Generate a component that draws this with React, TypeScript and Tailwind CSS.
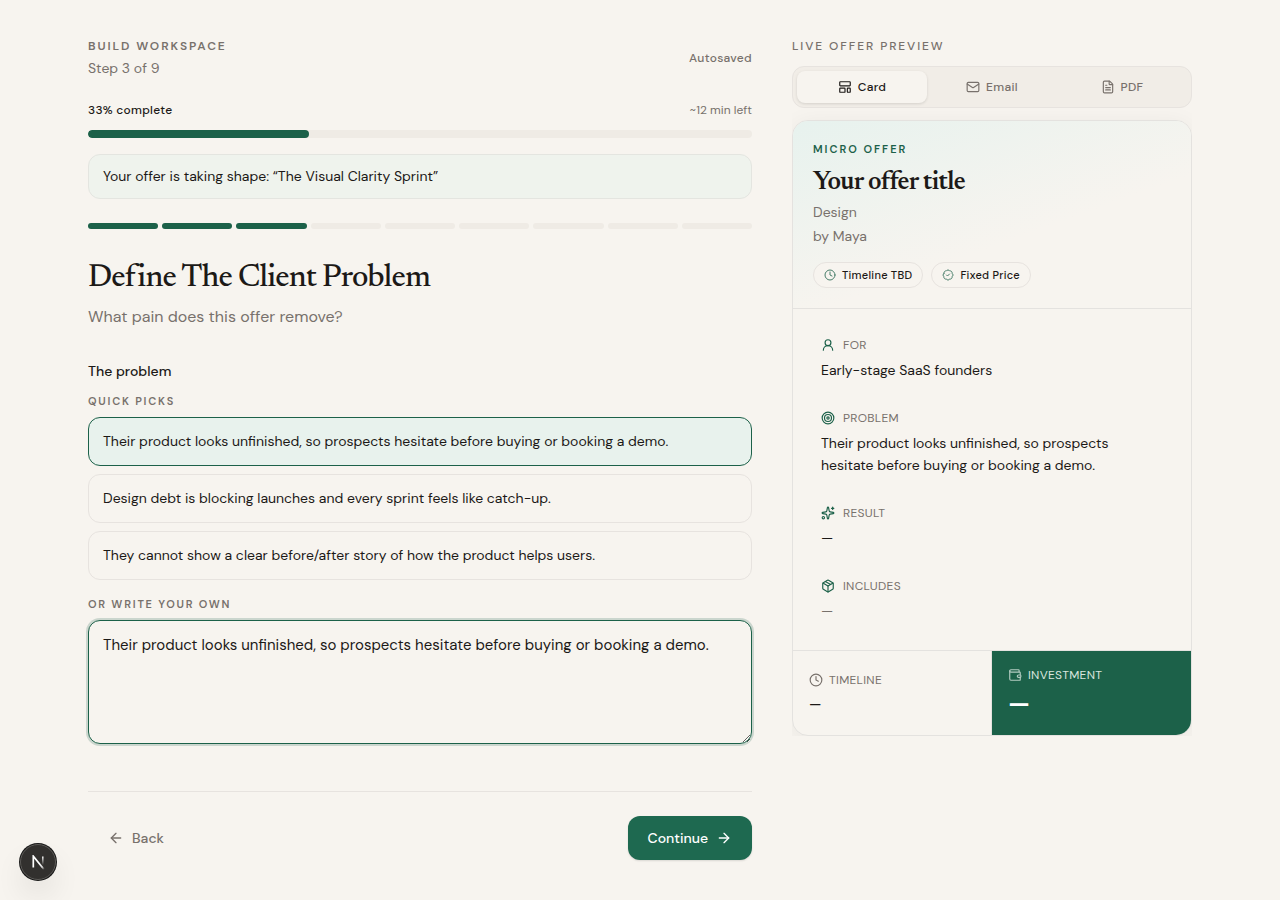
import { useState } from "react";
import type { ReactNode } from "react";
import {
  ArrowLeft,
  ArrowRight,
  BadgeCheck,
  Clock,
  FileText,
  LayoutTemplate,
  Mail,
  Package,
  Sparkles,
  Target,
  UserRound,
  Wallet,
} from "lucide-react";

const picks = [
  "Their product looks unfinished, so prospects hesitate before buying or booking a demo.",
  "Design debt is blocking launches and every sprint feels like catch-up.",
  "They cannot show a clear before/after story of how the product helps users.",
];

const steps = [1, 2, 3, 4, 5, 6, 7, 8, 9];

function Tab({ icon, label, active }: { icon: ReactNode; label: string; active?: boolean }) {
  return (
    <button
      type="button"
      role="tab"
      aria-selected={!!active}
      className={
        "flex h-8 flex-1 items-center justify-center gap-1.5 rounded-lg text-xs font-medium tracking-wide " +
        (active ? "bg-[#f7f4ef] text-[#1c1917] shadow-[0_1px_3px_rgba(0,0,0,0.12)]" : "text-[#78716c]")
      }
    >
      {icon}
      {label}
    </button>
  );
}

function Detail({
  icon,
  label,
  muted,
  children,
}: {
  icon: ReactNode;
  label: string;
  muted?: boolean;
  children: ReactNode;
}) {
  return (
    <div>
      <dt className="flex items-center gap-2 text-xs leading-[18px] tracking-wide text-[#78716c] uppercase">
        <span className="text-[#1c6149]">{icon}</span>
        {label}
      </dt>
      <dd className={"mt-[5px] text-sm leading-[22px] " + (muted ? "text-[#78716c]" : "text-[#1c1917]")}>
        {children}
      </dd>
    </div>
  );
}

function Chip({ icon, label }: { icon: ReactNode; label: string }) {
  return (
    <li className="flex h-[26px] items-center gap-1.5 rounded-full border border-[#e7e3df] bg-[#f7f4ef] px-2.5 text-[11px] font-medium tracking-wide text-[#1c1917]">
      <span className="text-[#1c6149] opacity-80">{icon}</span>
      {label}
    </li>
  );
}

function FrameworkBadge() {
  return (
    <button
      type="button"
      aria-label="Open developer tools"
      className="fixed bottom-5 left-5 flex size-9 items-center justify-center rounded-full border border-[#5c5a57] bg-[#32302e] shadow-[0_0_0_1px_#171717,0_16px_32px_-8px_rgba(0,0,0,0.24)]"
    >
      <svg width="14" height="15" viewBox="0 0 14 15" fill="none" aria-hidden="true">
        <path d="M13.3 14.8 2.3 1.2V12.6" stroke="url(#nStem)" strokeWidth="1.7" />
        <path d="M11.8 1.5v11.6" stroke="url(#nBar)" strokeWidth="1.5" />
        <defs>
          <linearGradient id="nStem" x1="8.5" y1="8.5" x2="13" y2="14.5" gradientUnits="userSpaceOnUse">
            <stop stopColor="#fff" />
            <stop offset="0.6" stopColor="#fff" stopOpacity="0.8" />
            <stop offset="1" stopColor="#fff" stopOpacity="0" />
          </linearGradient>
          <linearGradient id="nBar" x1="12" y1="1.5" x2="12" y2="10" gradientUnits="userSpaceOnUse">
            <stop stopColor="#fff" />
            <stop offset="1" stopColor="#fff" stopOpacity="0" />
          </linearGradient>
        </defs>
      </svg>
    </button>
  );
}

export default function App() {
  const [problem, setProblem] = useState(picks[0]);

  return (
    <div className="min-h-screen bg-[#f7f4ef] font-['DM_Sans',Inter,sans-serif] text-[#1c1917]">
      <div className="mx-auto grid max-w-6xl grid-cols-[minmax(0,1fr)_400px] items-start gap-10 px-6 pt-9 pb-10">
        <main>
          <header className="flex items-center justify-between">
            <div>
              <p className="text-xs leading-5 font-semibold tracking-[0.16em] text-[#78716c] uppercase">
                Build workspace
              </p>
              <p className="text-sm leading-6 text-[#78716c]">Step 3 of 9</p>
            </div>
            <p className="text-xs font-medium tracking-wide text-[#78716c]">Autosaved</p>
          </header>

          <div className="mt-5 flex items-center justify-between text-xs leading-5">
            <span className="font-medium tracking-wide">33% complete</span>
            <span className="text-[#78716c]">~12 min left</span>
          </div>
          <div className="mt-2.5 h-2 overflow-hidden rounded-full bg-[#efebe5]">
            <div className="h-full w-1/3 rounded-full bg-[#1c6149]" />
          </div>

          <p className="mt-4 rounded-xl border border-[#e4e5e0] bg-[#eff3ed] px-3.5 py-[11px] text-sm leading-[21px]">
            Your offer is taking shape: “The Visual Clarity Sprint”
          </p>

          <div className="mt-6 flex gap-1">
            {steps.map((step) => (
              <span
                key={step}
                className={"h-1.5 flex-1 rounded-full " + (step <= 3 ? "bg-[#1c6149]" : "bg-[#efebe5]")}
              />
            ))}
          </div>

          <h1 className="mt-[29px] font-['Newsreader','Liberation_Serif',serif] text-[32px] leading-10 font-medium tracking-tight">
            Define The Client Problem
          </h1>
          <p className="mt-[7px] text-base leading-6 text-[#78716c]">What pain does this offer remove?</p>

          <h2 className="mt-8 text-sm leading-5 font-medium">The problem</h2>
          <p className="mt-3 text-[11px] leading-4 font-semibold tracking-[0.16em] text-[#78716c] uppercase">
            Quick picks
          </p>
          <div className="mt-2 flex flex-col gap-2">
            {picks.map((pick) => (
              <button
                key={pick}
                type="button"
                aria-pressed={pick === problem}
                onClick={() => setProblem(pick)}
                className={
                  "rounded-xl border px-3.5 py-3 text-left text-sm leading-[23px] " +
                  (pick === problem ? "border-[#1c6149] bg-[#e8f2ed]" : "border-[#e7e3df]")
                }
              >
                {pick}
              </button>
            ))}
          </div>

          <label
            htmlFor="problem"
            className="mt-4 block text-[11px] leading-4 font-semibold tracking-[0.16em] text-[#78716c] uppercase"
          >
            Or write your own
          </label>
          <textarea
            id="problem"
            value={problem}
            onChange={(event) => setProblem(event.target.value)}
            className="mt-2 block h-[124px] w-full resize-y rounded-xl border border-[#1c6149] bg-[#f7f4ef] px-3.5 py-3 text-[15px] leading-6 shadow-[0_0_0_2px_rgba(28,97,73,0.2)] outline-none"
          />

          <footer className="mt-[47px] flex items-center justify-between border-t border-[#e7e3df] pt-6">
            <button
              type="button"
              className="flex h-11 items-center gap-2 rounded-xl px-5 text-sm font-medium text-[#78716c]"
            >
              <ArrowLeft size={16} />
              Back
            </button>
            <button
              type="button"
              className="flex h-11 items-center gap-2 rounded-xl bg-[#1e6950] px-5 text-sm font-medium text-white shadow-[0_1px_2px_rgba(0,0,0,0.12)]"
            >
              Continue
              <ArrowRight size={16} />
            </button>
          </footer>
        </main>

        <aside>
          <h2 className="text-xs leading-5 font-medium tracking-[0.16em] text-[#78716c] uppercase">
            Live offer preview
          </h2>
          <div role="tablist" className="mt-2.5 flex rounded-xl border border-[#e7e3df] bg-[#f1ede7] p-1">
            <Tab active icon={<LayoutTemplate size={14} />} label="Card" />
            <Tab icon={<Mail size={14} />} label="Email" />
            <Tab icon={<FileText size={14} />} label="PDF" />
          </div>

          <div className="overflow-hidden pt-3">
            <article className="overflow-hidden rounded-2xl border border-[#e4e2df] bg-[#f7f4ef] shadow-[0_4px_24px_rgba(0,0,0,0.06)]">
              <div className="border-b border-[#e4e2df] bg-[linear-gradient(160deg,#e7f2ee_0%,#f7f4ef_60%)] p-5">
                <p className="text-[11px] leading-4 font-semibold tracking-[0.18em] text-[#1c6149] uppercase">
                  Micro offer
                </p>
                <h3 className="mt-2.5 font-['Newsreader','Liberation_Serif',serif] text-[26px] leading-8 font-semibold tracking-tight">
                  Your offer title
                </h3>
                <p className="mt-px text-sm leading-6 text-[#78716c]">
                  Design
                  <br />
                  by Maya
                </p>
                <ul className="mt-3.5 flex gap-2">
                  <Chip icon={<Clock size={12} />} label="Timeline TBD" />
                  <Chip icon={<BadgeCheck size={12} />} label="Fixed Price" />
                </ul>
              </div>

              <dl className="flex flex-col gap-7 px-7 pt-[27px] pb-7">
                <Detail icon={<UserRound size={14} />} label="For">
                  Early-stage SaaS founders
                </Detail>
                <Detail icon={<Target size={14} />} label="Problem">
                  {problem}
                </Detail>
                <Detail icon={<Sparkles size={14} />} label="Result">
                  —
                </Detail>
                <Detail icon={<Package size={14} />} label="Includes" muted>
                  —
                </Detail>
              </dl>

              <div className="grid grid-cols-2 border-t border-[#e4e2df]">
                <div className="flex flex-col justify-center border-r border-[#e4e2df] px-4">
                  <p className="flex items-center gap-1.5 text-xs leading-[18px] tracking-wide text-[#78716c] uppercase">
                    <Clock size={14} />
                    Timeline
                  </p>
                  <p className="mt-1 text-sm leading-[22px] font-medium">—</p>
                </div>
                <div className="flex flex-col bg-[#1c6149] px-4 py-[15px] text-white">
                  <p className="flex items-center gap-1.5 text-xs leading-[18px] tracking-wide text-[#d9e6df] uppercase">
                    <Wallet size={14} className="opacity-80" />
                    Investment
                  </p>
                  <p className="mt-1 text-2xl leading-8 font-bold">—</p>
                </div>
              </div>
            </article>
          </div>
        </aside>
      </div>
      <FrameworkBadge />
    </div>
  );
}
